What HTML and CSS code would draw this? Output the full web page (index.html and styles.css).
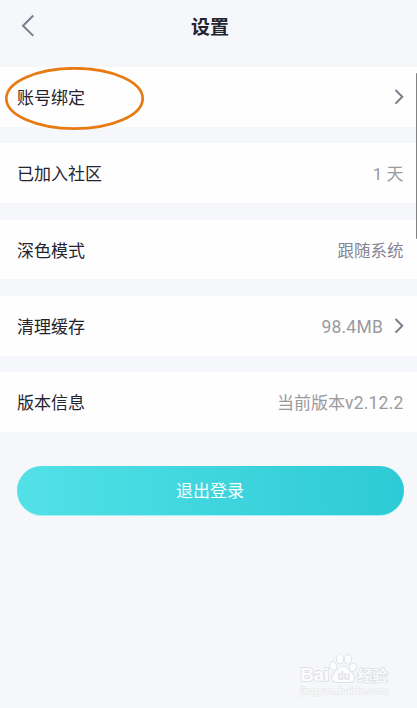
FILE: index.html
```html
<!DOCTYPE html>
<html lang="zh-CN">
<head>
<meta charset="utf-8">
<meta name="viewport" content="width=device-width, initial-scale=1">
<title>设置</title>
<link rel="stylesheet" href="styles.css">
</head>
<body>
<header class="topbar">
  <svg class="back" width="14" height="24" viewBox="0 0 14 24"><path d="M12.300 1.500 2 11.700l10.300 10.200"/></svg>
  <h1 class="title">设置</h1>
</header>
<main>
  <ul class="list">
    <li class="row">
      <span class="label">账号绑定</span>
      <svg class="chevron" width="10" height="16" viewBox="0 0 10 16"><path d="M1.500 1 8.300 7.800l-6.800 6.800"/></svg>
      <svg class="highlight" width="140" height="64" viewBox="0 0 140 64"><ellipse cx="69.500" cy="31.500" rx="68.200" ry="30.200"/></svg>
    </li>
    <li class="row"><span class="label">已加入社区</span><span class="value">1 天</span></li>
    <li class="row"><span class="label">深色模式</span><span class="value mode">跟随系统</span></li>
    <li class="row">
      <span class="label">清理缓存</span><span class="value size">98.4MB</span>
      <svg class="chevron" width="10" height="16" viewBox="0 0 10 16"><path d="M1.500 1 8.300 7.800l-6.800 6.800"/></svg>
    </li>
    <li class="row"><span class="label">版本信息</span><span class="value">当前版本<span class="version">v2.12.2</span></span></li>
  </ul>
  <button class="logout" type="button">退出登录</button>
</main>
<div class="scrollbar"></div>
<svg class="watermark" width="100" height="50" viewBox="0 0 100 50">
  <g class="mark">
    <text class="brand" x="3.500" y="31" textLength="28.500" lengthAdjust="spacingAndGlyphs">Bai</text>
    <ellipse cx="36.300" cy="16" rx="3" ry="3.800" transform="rotate(-15 36.300 16)"/>
    <ellipse cx="43" cy="9" rx="3.200" ry="4.400"/>
    <ellipse cx="51" cy="9.300" rx="3.200" ry="4.400"/>
    <ellipse cx="56" cy="17.300" rx="3" ry="3.800" transform="rotate(15 56 17.300)"/>
    <path d="M46.500 16.500c4 0 4.500 3.500 7.500 6 4.500 3.500 4.500 9.500-1.500 9.500h-12c-6.500 0-7-6-2.500-9.500 3-2.500 4-6 8.500-6z"/>
    <text class="paw-text" x="40.500" y="30" textLength="12.500" lengthAdjust="spacingAndGlyphs">du</text>
    <text class="cjk" x="60.500" y="30.500" textLength="30">经验</text>
    <text class="site" x="3.500" y="43.500" textLength="88" lengthAdjust="spacingAndGlyphs">jingyan.baidu.com</text>
  </g>
</svg>
</body>
</html>
```

FILE: styles.css
```css
* { box-sizing: border-box; }
body {
  position: relative;
  margin: 0;
  height: 708px;
  overflow: hidden;
  background: #f5f7fb;
  color: #24232f;
  font-family: Roboto, "Noto Sans CJK SC", sans-serif;
  font-size: 17px;
}
.topbar {
  position: relative;
  display: flex;
  align-items: center;
  justify-content: center;
  height: 67px;
  padding: 0 0 12px 3px;
}
.back {
  position: absolute;
  left: 20.500px;
  top: 14px;
}
.back path, .chevron path {
  fill: none;
  stroke: #7d7c8d;
  stroke-width: 2;
}
.title {
  margin: 0;
  font-size: 19px;
  font-weight: 700;
  line-height: 28px;
}
.list {
  display: grid;
  grid-auto-rows: 59.8px;
  gap: 16.55px;
  margin: 0;
  padding: 0;
  list-style: none;
}
.row {
  position: relative;
  display: flex;
  align-items: center;
  padding: 0 13.500px 0 17px;
  background: #fefefe;
  line-height: 24px;
}
.label, .value { padding-top: 2px; }
.label { font-weight: 400; }
.value { margin-left: auto; color: #9a9a9d; }
.mode { color: #858494; font-size: 16.500px; padding-top: 4px; }
.size { font-size: 17.500px; letter-spacing: 0.2px; padding-top: 2px; }
.version { font-size: 17.500px; letter-spacing: 0.2px; }
.chevron { margin-left: auto; }
.value + .chevron { margin-left: 10.500px; }
.highlight {
  position: absolute;
  left: 5px;
  top: 0;
}
.highlight ellipse {
  fill: none;
  stroke: #e87a12;
  stroke-width: 2.7;
}
.logout {
  display: block;
  width: 387px;
  height: 49px;
  margin: 34px 0 0 16.500px;
  padding: 0 0 2px;
  border: 0;
  border-radius: 25px;
  background: linear-gradient(90deg, #52e1e7, #2dcad5);
  box-shadow: 0 1px 0 #a5f1f3;
  color: #f5ffff;
  font: inherit;
}
.scrollbar {
  position: absolute;
  right: 0;
  top: 73px;
  width: 1.500px;
  height: 166px;
  border-radius: 2px 0 0 2px;
  background: #828282;
}
.watermark {
  position: absolute;
  left: 297px;
  top: 650px;
}
.mark {
  fill: #fcfdfe;
  stroke: #dfe1e5;
  stroke-width: 1.8;
  paint-order: stroke;
  font-family: "Liberation Sans", "Noto Sans CJK SC", sans-serif;
}
.brand { font-size: 18px; font-weight: 700; }
.paw-text { font-size: 13px; font-weight: 700; fill: #dfe1e5; stroke: none; }
.cjk { font-size: 15px; font-weight: 500; }
.site { font-size: 9px; stroke-width: 1.2; stroke: #e6e8ec; }
```
